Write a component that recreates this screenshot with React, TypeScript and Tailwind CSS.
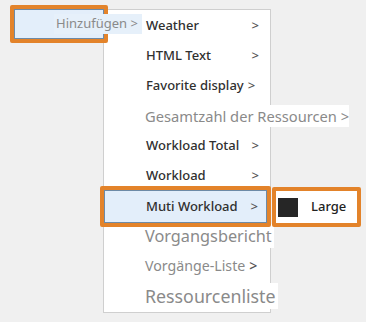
import React from "react";

const Arrow = () => (
  <span className="text-[#555] text-[13px] font-medium ml-auto pr-[11px]">&gt;</span>
);

function Item({ label }: { label: string }) {
  return (
    <div className="h-[30px] flex items-center pl-[42px] text-[13px] text-[#303030] font-medium">
      <span>{label}</span>
      <Arrow />
    </div>
  );
}

export default function App() {
  return (
    <div
      className="relative w-[366px] h-[322px] bg-[#f0f0f0] overflow-hidden"
      style={{ fontFamily: '"Noto Sans", "Open Sans", sans-serif' }}
    >
      {/* Menu panel */}
      <div className="absolute left-[103px] top-[9px] w-[168px] h-[304px] bg-white border border-[#cfcfcf] pt-[1px]">
        <Item label="Weather" />
        <Item label="HTML Text" />
        <div className="h-[30px] flex items-center pl-[42px] text-[13px] text-[#303030] font-medium whitespace-nowrap">
          <span>Favorite display</span>
          <span className="text-[#555] font-medium ml-[4px]">&gt;</span>
        </div>
        <div className="h-[30px] flex items-center pl-[41px] text-[14.7px] text-[#8a8a8a] whitespace-nowrap">
          <span className="bg-white">Gesamtzahl der Ressourcen &gt;</span>
        </div>
        <Item label="Workload Total" />
        <Item label="Workload" />
        <div className="h-[30px] flex items-center pl-[42px] text-[13px] text-[#303030] font-medium">
          <span>Muti Workload</span>
          <Arrow />
        </div>
        <div className="h-[30px] flex items-center pl-[41px] text-[16.3px] text-[#8a8a8a] whitespace-nowrap">
          <span className="bg-white pr-[2px]">Vorgangsbericht</span>
        </div>
        <div className="h-[30px] flex items-center pl-[41px] text-[14.2px] text-[#8a8a8a] whitespace-nowrap">
          <span>Vorgänge-Liste</span>
          <span className="text-[#555] font-medium ml-[4px]">&gt;</span>
        </div>
        <div className="h-[30px] flex items-center pl-[41px] text-[17.8px] text-[#8a8a8a] whitespace-nowrap">
          <span className="bg-white pr-[2px]">Ressourcenliste</span>
        </div>
      </div>

      {/* Hinzufügen highlight */}
      <div className="absolute left-[10px] top-[5px] w-[98px] h-[38px] border-[4px] border-[#e3832a] rounded-[2px]">
        <div className="w-full h-full border border-[#6d8aa6] bg-[#e3eefa]" />
      </div>
      <div className="absolute left-[54px] top-[14px] h-[20px] pl-[2px] pr-[4px] flex items-center bg-[#e6f0fa] text-[13px] text-[#8a8a8a] whitespace-nowrap">
        Hinzufügen &gt;
      </div>

      {/* Muti Workload highlight */}
      <div className="absolute left-[100px] top-[186px] w-[171px] h-[41px] border-[4px] border-[#e3832a] rounded-[2px]">
        <div className="w-full h-full border border-[#6d8aa6] bg-[#e3eefa] flex items-center pl-[41px] text-[13px] text-[#303030] font-medium">
          <span>Muti Workload</span>
          <span className="text-[#555] font-medium ml-auto pr-[8px]">&gt;</span>
        </div>
      </div>

      {/* Large */}
      <div className="absolute left-[272px] top-[187px] w-[89px] h-[40px] border-[4px] border-[#e3832a] rounded-[2px] bg-white flex items-center pl-[2px]">
        <div className="w-[20px] h-[19px] bg-[#262626]" />
        <span className="ml-[13px] text-[13px] text-[#222] font-medium">Large</span>
      </div>
    </div>
  );
}
